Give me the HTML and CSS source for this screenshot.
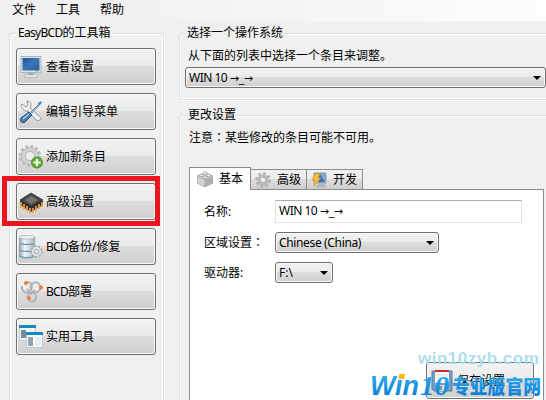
FILE: index.html
```html
<!DOCTYPE html>
<html lang="zh-CN">
  <head>
    <meta charset="UTF-8" />
    <meta name="viewport" content="width=device-width, initial-scale=1.0" />
    <title>EasyBCD</title>
    <link rel="stylesheet" href="styles.css">
  </head>
  <body>
    <nav class="menubar">
      <span>文件</span>
      <span>工具</span>
      <span>帮助</span>
    </nav>

    <div class="window">
      <fieldset class="group toolbox">
        <legend><span class="narrow">EasyBCD</span>的工具箱</legend>
        <button class="tool">
          <svg class="icon" viewBox="0 0 24 24">
            <defs>
              <linearGradient id="screen" x1="0" y1="0" x2="1" y2="1">
                <stop offset="0" stop-color="#1d529b" />
                <stop offset=".5" stop-color="#3d75b8" />
                <stop offset="1" stop-color="#285ca5" />
              </linearGradient>
              <linearGradient id="metal">
                <stop offset="0" stop-color="#8d9ba4" />
                <stop offset=".35" stop-color="#f2f6f8" />
                <stop offset="1" stop-color="#a5b1b8" />
              </linearGradient>
            </defs>
            <ellipse cx="12" cy="20.7" rx="7" ry="2.2" fill="#e3e6e3" stroke="#a0a5a0" stroke-width=".7" />
            <path d="M9 17h6v3H9z" fill="#aaa" />
            <path d="M2 1.5h20v16H2z" fill="#dce6e9" stroke="#a6b6bb" />
            <path d="M3.5 3h17v12.5h-17z" fill="url(#screen)" />
            <path d="M17 16.5h2" stroke="#8bdc25" />
          </svg>
          查看设置
        </button>
        <button class="tool">
          <svg class="icon" viewBox="0 0 24 24">
            <path d="M3 4l4 3 2-2-1-4c4 0 5 4 3 7l9 8c4 2 1 6-3 4l-8-9C6 12 2 9 2 5z" fill="#eceeef" stroke="#858c90" stroke-width=".9" />
            <path d="M12 12l8-8 1-2 1 1-2 2-7 8z" fill="#d0dce7" stroke="#61819f" />
            <path d="M19 3l3-2 1 2-3 3z" fill="#5d88b4" />
            <path d="M10 12l3 3-7 7c-3 2-6-1-4-4z" fill="#4c7db2" stroke="#244f7d" />
            <path d="M4 19l6-5" stroke="#b6d2ee" stroke-width="1.2" />
          </svg>
          编辑引导菜单
        </button>
        <button class="tool">
          <svg class="icon" viewBox="0 0 24 24">
            <circle cx="11" cy="11" r="9.7" fill="none" stroke="#b5b7b8" stroke-width="2.6" stroke-dasharray="2.6 2.5" />
            <circle cx="11" cy="11" r="6.7" fill="none" stroke="#d2d4d5" stroke-width="4" />
            <circle cx="11" cy="11" r="8.6" fill="none" stroke="#a5a9aa" stroke-width=".6" />
            <circle cx="11" cy="11" r="4.6" fill="#eee" stroke="#9ea1a2" stroke-width=".7" />
            <circle cx="18" cy="17.5" r="5.6" fill="#58b02c" stroke="#358519" stroke-width=".7" />
            <path d="M18 14v7M14.5 17.5h7" stroke="#fff" stroke-width="2.2" />
          </svg>
          添加新条目
        </button>
        <button class="tool marked">
          <svg class="icon" viewBox="0 0 24 24">
            <path d="M1 11l11-7 12 7v4l-12 7-11-7z" fill="#31302f" />
            <path d="M2 12v6M5 14v6M8 16v5M11 18v5M14 18v5M17 16v5M20 14v5M23 12v5" stroke="#f1a13e" stroke-width="1.7" />
            <path d="M1 10l11-7 12 7-12 7z" fill="#4b4a49" stroke="#222" stroke-width=".7" />
            <path d="M6 10l6-4 7 4-7 4z" fill="#777573" />
          </svg>
          高级设置
        </button>
        <button class="tool">
          <svg class="icon" viewBox="0 0 24 24">
            <g fill="url(#metal)" stroke="#97a5ad" stroke-width=".6">
              <path d="M0 16v5c2 3 14 3 16 0v-5z" />
              <path d="M0 9v5c2 3 14 3 16 0V9z" />
              <path d="M0 2v5c2 3 14 3 16 0V2z" />
              <ellipse cx="8" cy="2.2" rx="8" ry="2" fill="#e9f0f3" />
            </g>
            <path d="M0 8c3 2 13 2 16 0M0 15c3 2 13 2 16 0M0 21c3 2 13 2 16 0" fill="none" stroke="#5499b8" />
            <circle cx="17.5" cy="16.5" r="5.2" fill="#e3e5e6" stroke="#a2a9ad" stroke-width="2" stroke-dasharray="2.1 1.5" />
            <circle cx="17.5" cy="16.5" r="4.4" fill="#dfe2e3" />
            <circle cx="17.5" cy="16.5" r="2" fill="#fff" stroke="#939b9f" />
          </svg>
          <span><span class="narrow">BCD</span>备份/修复</span>
        </button>
        <button class="tool">
          <svg class="icon" viewBox="0 0 24 24">
            <g fill="none" stroke="#aeb3b5" stroke-width="2">
              <path d="M7 3c4-3 8 3 4 8-3 4-9 0-8-5" />
              <path d="M12 10c-2-6 5-10 8-6 4 5-2 11-7 7" />
              <path d="M8 18c2-7 9-7 9-1 0 5-5 6-7 3M8 9l4 5 4-4" />
            </g>
            <g fill="#f47a31">
              <circle cx="7" cy="3" r="2" />
              <circle cx="22" cy="7.5" r="2" />
              <circle cx="10" cy="18" r="2" />
            </g>
          </svg>
          <span><span class="narrow">BCD</span>部署</span>
        </button>
        <button class="tool">
          <svg class="icon" viewBox="0 0 24 24">
            <path d="M.5.5h16v15H.5z" fill="#f4f8fb" stroke="#b7cbd8" />
            <path d="M0 0h17v3H0z" fill="#1689bd" />
            <path d="M2 5h5v8H2z" fill="#798b98" />
            <path d="M7.500 7.500h16v15h-16z" fill="#fbfdff" stroke="#b2cfe1" />
            <path d="M7 7h17v3H7z" fill="#168bc2" />
            <path d="M9 12h5v9H9z" fill="#95a3ad" />
            <path d="M16 12h6v9h-6z" fill="#e9ebec" />
          </svg>
          实用工具
        </button>
      </fieldset>

      <main class="content">
        <fieldset class="group system">
          <legend>选择一个操作系统</legend>
          <p>从下面的列表中选择一个条目来调整。</p>
          <div class="combo combo-wide">
            <span>WIN 10 <span class="arrows">→_→</span></span>
          </div>
        </fieldset>

        <fieldset class="group settings">
          <legend>更改设置</legend>
          <p>注意<span class="colon" lang="zh-TW">：</span>某些修改的条目可能不可用。</p>
          <div class="tabs">
            <div class="tab active">
              <svg class="tab-icon" viewBox="0 0 16 16">
                <path d="M0 5l8-3 8 3v7l-8 4-8-4z" fill="#d2d3d3" stroke="#999" stroke-width=".7" />
                <path d="M0 5l8 4 8-4M8 9v7" fill="none" stroke="#aaa" stroke-width=".7" />
                <path d="M8 9l8-4v7l-8 4z" fill="#aeb0b0" />
                <g fill="#eee" stroke="#929292" stroke-width=".7">
                  <ellipse cx="4.500" cy="4.500" rx="2" ry="1.300" />
                  <ellipse cx="8" cy="2.400" rx="2.200" ry="1.500" />
                  <ellipse cx="11.500" cy="4.500" rx="2" ry="1.300" />
                  <ellipse cx="8" cy="6.300" rx="2" ry="1.300" />
                </g>
              </svg>
              基本
            </div>
            <div class="tab">
              <svg class="tab-icon" viewBox="0 0 16 16">
                <circle cx="8" cy="8" r="6.600" fill="none" stroke="#aaa" stroke-width="2.400" stroke-dasharray="2.600 2.580" />
                <circle cx="8" cy="8" r="4.300" fill="none" stroke="#b9b9b9" stroke-width="3" />
                <circle cx="8" cy="8" r="2.700" fill="#eee" stroke="#999" stroke-width=".6" />
              </svg>
              高级
            </div>
            <div class="tab">
              <svg class="tab-icon" viewBox="0 0 16 16">
                <path d="M3 1h12v10H3z" fill="#3975b4" stroke="#a9b4bb" stroke-width="1.300" />
                <path d="M9 2h5v8z" fill="#7aa9d5" />
                <path d="M8 12h4v1h2v2H6v-1z" fill="#bcc0bf" stroke="#8d9493" stroke-width=".5" />
                <path d="M4 2h5L7 6h3l-7 8 1-6H1z" fill="#fac342" stroke="#d69121" stroke-width=".7" />
              </svg>
              开发
            </div>
          </div>
          <div class="panel">
            <div class="row">
              <label>名称:</label>
              <div class="textbox">WIN 10 <span class="arrows">→_→</span></div>
            </div>
            <div class="row">
              <label>区域设置<span class="colon" lang="zh-TW">：</span></label>
              <div class="combo combo-locale"><span>Chinese (China)</span></div>
            </div>
            <div class="row">
              <label>驱动器:</label>
              <div class="combo combo-drive"><span>F:\</span></div>
            </div>
            <button class="tool save">
              <svg class="icon" viewBox="0 0 24 24">
                <path d="M2 2h20v20H4l-2-2z" fill="#6f9fc6" stroke="#567f9f" />
                <path d="M5 2h14v12H5z" fill="#f8f8f8" />
                <path d="M5 1h14v2H5z" fill="#c92b34" />
                <path d="M7 6h10M7 9h10" stroke="#ddd" />
                <path d="M7 16h10v6H7z" fill="#d8dfe3" />
                <path d="M9 17h3v4H9z" fill="#7b93a6" />
              </svg>
              保存设置
            </button>
          </div>
        </fieldset>
      </main>
    </div>

    <div class="watermark">
      <div class="site">win10zyb.com</div>
      <svg class="brand" viewBox="0 0 176 28">
        <defs>
          <linearGradient id="brandBlue" x1="0" y1="0" x2="0" y2="1">
            <stop offset="0" stop-color="#31b4f2" />
            <stop offset="1" stop-color="#0876cf" />
          </linearGradient>
        </defs>
        <g fill="url(#brandBlue)">
          <text class="brand-win" x="0" y="23" textLength="49" lengthAdjust="spacingAndGlyphs">Win</text>
          <text class="brand-ten" x="50" y="23" textLength="29" lengthAdjust="spacingAndGlyphs">10</text>
          <text class="brand-cn" x="82" y="22" textLength="89" lengthAdjust="spacingAndGlyphs">专业版官网</text>
        </g>
        <path d="M29.500 2h5.500l-1 5h-5.500z" fill="#fdb913" />
      </svg>
    </div>
  </body>
</html>
```

FILE: styles.css
```css
*,
*::after {
  box-sizing: border-box;
}
body {
  margin: 0;
  height: 400px;
  overflow: hidden;
  background: #f0f0f0;
  color: #000;
  font: 12px/16px "Noto Sans", "Noto Sans CJK SC", sans-serif;
}
.menubar {
  display: flex;
  gap: 20px;
  height: 21px;
  padding: 2px 12px;
  background: linear-gradient(90deg, #f0f0f0 20%, #fdfdfd);
}
.window {
  display: flex;
  gap: 15px;
  height: 379px;
  padding: 4px 0 0 9px;
  overflow: hidden;
}
.group {
  margin: 0;
  min-width: 0;
  border: 1px solid #d5dfe5;
  border-radius: 3px;
  box-shadow: inset 0 0 0 1px #fff, 1px 1px 0 #fff;
}
legend {
  height: 16px;
  padding: 0 1px;
  background: #f0f0f0;
}
.narrow {
  letter-spacing: -0.7px;
}
.toolbox {
  flex: none;
  width: 155px;
  height: 400px;
  padding: 7px 6px 0;
}
.toolbox legend {
  margin-left: 1px;
}
.tool {
  display: flex;
  align-items: center;
  gap: 3px;
  width: 140px;
  height: 37px;
  margin: 0 0 8px;
  padding: 0 2px;
  border: 1px solid #707070;
  border-radius: 3px;
  background: linear-gradient(#f2f2f2, #ebebeb 49%, #dddddd 50%, #cfcfcf);
  box-shadow: inset 0 0 0 1px #f8f8f8;
  color: #000;
  font: inherit;
  white-space: nowrap;
}
.icon {
  flex: none;
  width: 24px;
  height: 24px;
}
.marked {
  position: relative;
}
/* red frame over the highlighted tool */
.marked::after {
  content: "";
  position: absolute;
  left: -15px;
  top: -8px;
  width: 158px;
  height: 50px;
  border: 5px solid #ed141d;
}
.content {
  width: 370px;
  flex: none;
}
.content p {
  margin: 0;
}
.system {
  height: 75px;
  padding: 7px 6px 0 5px;
}
.system legend {
  margin-left: 1px;
}
.system p {
  padding-left: 3px;
  margin-bottom: 3px;
}
.settings {
  height: 310px;
  margin-top: 7px;
  padding: 7px 10px 0 9px;
}
.settings legend {
  margin-left: -2px;
}
.colon {
  font-family: "Noto Sans CJK TC", sans-serif;
  line-height: 1;
}
.combo {
  display: flex;
  align-items: center;
  justify-content: space-between;
  height: 21px;
  padding: 0 4px 0 3px;
  border: 1px solid #707070;
  border-radius: 3px;
  background: linear-gradient(#f2f2f2, #ebebeb 49%, #dddddd 50%, #cfcfcf);
  box-shadow: inset 0 0 0 1px #f8f8f8;
  white-space: nowrap;
}
.combo::after {
  content: "";
  border: 4px solid transparent;
  border-top-color: #000;
  border-bottom: 0;
}
.combo-wide {
  width: 361px;
  letter-spacing: -0.5px;
}
.combo-locale {
  width: 164px;
  letter-spacing: -0.35px;
}
.combo-drive {
  width: 58px;
}
.arrows {
  font: 11px/12px "DejaVu Sans", sans-serif;
  letter-spacing: -0.4px;
}
.tabs {
  display: flex;
  align-items: flex-end;
  height: 22px;
  margin-top: 21px;
}
.tab {
  display: flex;
  align-items: center;
  gap: 6px;
  width: 56px;
  height: 20px;
  padding-left: 4px;
  border: 1px solid #898c95;
  border-left: 0;
  border-bottom: 0;
  background: linear-gradient(#f2f2f2, #ebebeb 49%, #dddddd 50%, #cfcfcf);
}
/* the selected tab runs into the panel */
.tab.active {
  position: relative;
  width: 62px;
  height: 23px;
  margin-bottom: -1px;
  padding-left: 7px;
  border-left: 1px solid #898c95;
  background: #fff;
}
.tab-icon {
  flex: none;
  width: 16px;
  height: 16px;
}
.panel {
  width: 355px;
  height: 250px;
  padding: 10px 9px 0 14px;
  border: 1px solid #898c95;
  background: #fff;
}
.row {
  display: flex;
  align-items: center;
  height: 21px;
  margin-bottom: 9px;
}
.row label {
  width: 71px;
  flex: none;
}
.row:first-child {
  height: 23px;
}
.textbox {
  width: 247px;
  height: 23px;
  padding: 2px 3px;
  border: 1px solid #e2e3ea;
  border-top-color: #abadb3;
  border-radius: 1px;
  letter-spacing: -0.5px;
}
.save {
  width: 108px;
  margin: 79px 0 0 auto;
  padding-left: 3px;
}
.watermark {
  position: absolute;
  left: 370px;
  top: 348px;
  width: 176px;
}
.site {
  padding-left: 48px;
  color: #a5dcea;
  font: bold 17px/22px "Liberation Sans", sans-serif;
  letter-spacing: 0.5px;
  opacity: 0.9;
}
.brand {
  display: block;
  width: 176px;
  height: 28px;
  margin-top: 2px;
}
.brand-win {
  font: italic bold 27px "Liberation Sans", sans-serif;
}
.brand-ten {
  font: italic bold 27px "Liberation Serif", serif;
}
.brand-cn {
  font: 900 19px "Noto Sans CJK SC", sans-serif;
}
```
